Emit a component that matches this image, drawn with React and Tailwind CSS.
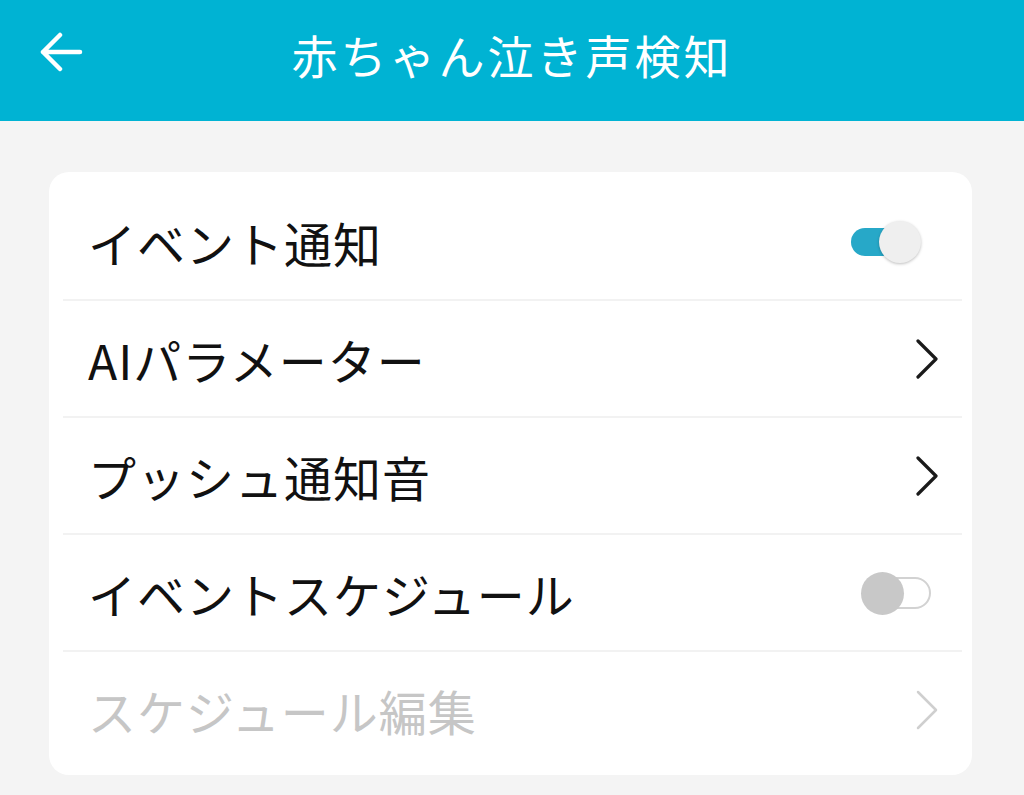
import React, { useState } from "react";

const Chevron = ({ disabled }) => (
  <svg width="26" height="40" viewBox="0 0 26 40" fill="none">
    <path
      d="M4 2 L22 20 L4 38"
      stroke={disabled ? "#cfcfcf" : "#1a1a1a"}
      strokeWidth={disabled ? 2.5 : 3.2}
      strokeLinecap="round"
      strokeLinejoin="round"
    />
  </svg>
);

const Row = ({ label, disabled, right, last }) => (
  <>
    <div className="flex items-center h-[115px] pl-[39px] pr-[33px]">
      <span className={`flex-1 text-[48px] tracking-[1px] ${disabled ? "text-[#c6c6c6]" : "text-[#111111]"}`}>{label}</span>
      {right}
    </div>
    {!last && <div className="h-[2px] bg-[#f2f2f2] ml-[14px] mr-[10px]" />}
  </>
);

export default function App() {
  const [notify, setNotify] = useState(true);
  const [schedule, setSchedule] = useState(false);

  return (
    <div
      className="w-[1024px] h-[795px] bg-[#f4f4f4] overflow-hidden"
      style={{ fontFamily: '"Noto Sans CJK JP", "Noto Sans", sans-serif' }}
    >
      <div className="h-[121px] bg-[#00b3d3] flex items-center relative">
        <button className="absolute left-[40px] top-[32px]">
          <svg width="44" height="40" viewBox="0 0 44 40" fill="none">
            <path d="M3 20 H40 M20 3 L3 20 L20 37" stroke="white" strokeWidth="4.5" strokeLinecap="round" strokeLinejoin="round" />
          </svg>
        </button>
        <h1 className="flex-1 text-center text-white text-[46px] tracking-[3px] pb-[12px]">赤ちゃん泣き声検知</h1>
      </div>

      <div className="mx-[49px] mt-[51px] bg-white rounded-[20px] pt-[12px] pb-[8px] w-[923px]">
        <Row
          label="イベント通知"
          right={
            <button onClick={() => setNotify(!notify)} className="relative w-[72px] h-[44px] mr-[18px]">
              <span className={`absolute left-[2px] top-[8px] w-[56px] h-[28px] rounded-full ${notify ? "bg-[#27a8c8]" : "bg-white border-2 border-[#cccccc]"}`} />
              <span className={`absolute top-[1px] w-[42px] h-[42px] rounded-full shadow-[0_1px_3px_rgba(0,0,0,0.25)] ${notify ? "left-[30px] bg-[#efefef]" : "left-[0px] bg-[#c8c8c8]"}`} />
            </button>
          }
        />
        <Row label="AIパラメーター" right={<div className="mr-[-1px]"><Chevron /></div>} />
        <Row label="プッシュ通知音" right={<div className="mr-[-1px]"><Chevron /></div>} />
        <Row
          label="イベントスケジュール"
          right={
            <button onClick={() => setSchedule(!schedule)} className="relative w-[72px] h-[44px] mr-[6px]">
              <span className={`absolute left-[2px] top-[6px] w-[68px] h-[32px] rounded-full ${schedule ? "bg-[#27a8c8]" : "bg-white border-2 border-[#d2d2d2]"}`} />
              <span className={`absolute top-[1px] w-[43px] h-[43px] rounded-full ${schedule ? "left-[29px] bg-[#efefef]" : "left-[0px] bg-[#c8c8c8]"}`} />
            </button>
          }
        />
        <Row label="スケジュール編集" disabled last right={<div className="mr-[-1px]"><Chevron disabled /></div>} />
      </div>
    </div>
  );
}
